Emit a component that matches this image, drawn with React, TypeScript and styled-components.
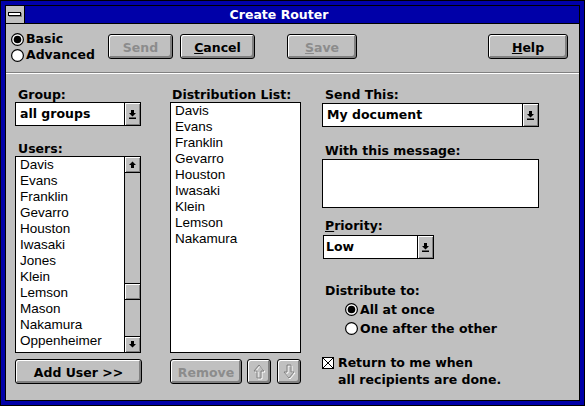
import React from "react";
import styled, { createGlobalStyle } from "styled-components";

const BLUE = "#0000a8";
const FACE = "#c0c0c0";
const SHADOW = "#808080";
const GRAYTEXT = "#8c8c8c";

const GlobalStyle = createGlobalStyle`
  html, body {
    margin: 0;
    padding: 0;
    background: ${FACE};
  }
  * {
    box-sizing: border-box;
  }
`;

const Frame = styled.div`
  width: 585px;
  height: 406px;
  border: 1px solid #000;
  background: ${BLUE};
  padding: 4px;
  font-family: "DejaVu Sans", sans-serif;
  font-weight: bold;
  font-size: 12.5px;
  color: #000;
`;

const Window = styled.div`
  height: 100%;
  border: 1px solid #000;
  background: ${FACE};
  display: flex;
  flex-direction: column;
`;

const TitleBar = styled.div`
  height: 18px;
  flex-shrink: 0;
  display: flex;
  border-bottom: 1px solid #000;
`;

const SystemBox = styled.div`
  width: 19px;
  border-right: 1px solid #000;
  background: ${FACE};
  display: flex;
  align-items: center;
  justify-content: center;
`;

const SystemBar = styled.span`
  width: 13px;
  height: 4px;
  background: #fff;
  border: 1px solid #000;
  box-shadow: 1px 1px 0 ${SHADOW};
  margin: -1px 1px 0 0;
`;

const Title = styled.div`
  flex: 1;
  background: ${BLUE};
  color: #fff;
  line-height: 17px;
  text-align: center;
  padding-right: 46px;
`;

const TopRow = styled.div`
  height: 48px;
  flex-shrink: 0;
  display: flex;
  align-items: flex-start;
  padding: 7px 11px 0 5px;
`;

const ModeGroup = styled.div`
  width: 97px;
  display: flex;
  flex-direction: column;
`;

const RadioRow = styled.div<{ $h: number; $indent?: number }>`
  height: ${(p) => p.$h}px;
  line-height: ${(p) => p.$h}px;
  display: flex;
  align-items: center;
  gap: 2px;
  padding-left: ${(p) => p.$indent ?? 0}px;
  white-space: nowrap;
`;

const Separator = styled.div`
  height: 2px;
  flex-shrink: 0;
  border-top: 1px solid ${SHADOW};
  border-bottom: 1px solid #fff;
`;

const PushButton = styled.div<{ $w: number; $ml?: number; $mt?: number; $off?: boolean }>`
  width: ${(p) => p.$w}px;
  height: 25px;
  flex-shrink: 0;
  margin-left: ${(p) => p.$ml ?? 0}px;
  margin-top: ${(p) => p.$mt ?? 0}px;
  border: 1px solid #000;
  border-radius: 3px;
  background: ${FACE};
  box-shadow: inset 1px 1px 0 #fff, inset -1px -1px 0 ${SHADOW},
    inset -2px -2px 0 ${SHADOW};
  color: ${(p) => (p.$off ? GRAYTEXT : "#000")};
  display: flex;
  align-items: center;
  justify-content: center;
  padding-top: 1px;
  white-space: nowrap;
`;

const Main = styled.div`
  flex: 1;
  display: flex;
  align-items: flex-start;
  padding: 14px 0 0 9px;
`;

const Column = styled.div<{ $w: number; $ml?: number }>`
  width: ${(p) => p.$w}px;
  margin-left: ${(p) => p.$ml ?? 0}px;
  display: flex;
  flex-direction: column;
  align-items: flex-start;
`;

const Label = styled.div<{ $mt?: number }>`
  height: 14px;
  line-height: 14px;
  padding-left: 3px;
  margin-top: ${(p) => p.$mt ?? 0}px;
  white-space: nowrap;
`;

const Combo = styled.div<{ $w: number; $mt?: number; $ml?: number }>`
  width: ${(p) => p.$w}px;
  height: 24px;
  margin-top: ${(p) => p.$mt ?? 0}px;
  margin-left: ${(p) => p.$ml ?? 0}px;
  border: 1px solid #000;
  background: #fff;
  display: flex;
`;

const ComboText = styled.div`
  flex: 1;
  line-height: 21px;
  padding-left: 4px;
  white-space: nowrap;
`;

const DropButton = styled.div`
  width: 16px;
  border-left: 1px solid #000;
  background: ${FACE};
  box-shadow: inset 1px 1px 0 #fff, inset -1px -1px 0 ${SHADOW};
  display: flex;
  align-items: center;
  justify-content: center;
`;

const ListBox = styled.div<{ $w: number; $h: number }>`
  width: ${(p) => p.$w}px;
  height: ${(p) => p.$h}px;
  border: 1px solid #000;
  background: #fff;
  display: flex;
  overflow: hidden;
`;

const Items = styled.div`
  flex: 1;
  padding-left: 4px;
  font-family: "Liberation Sans", Arial, sans-serif;
  font-weight: normal;
  font-size: 13.5px;
  line-height: 16px;
  overflow: hidden;
`;

const ScrollBar = styled.div`
  width: 16px;
  border-left: 1px solid #000;
  background: ${FACE};
  display: flex;
  flex-direction: column;
`;

const ScrollArrow = styled.div<{ $bottom?: boolean }>`
  height: 16px;
  flex-shrink: 0;
  ${(p) => (p.$bottom ? "border-top" : "border-bottom")}: 1px solid #000;
  box-shadow: inset 1px 1px 0 #fff, inset -1px -1px 0 ${SHADOW};
  display: flex;
  align-items: center;
  justify-content: center;
`;

const Track = styled.div`
  flex: 1;
  display: flex;
  flex-direction: column;
`;

const Thumb = styled.div<{ $top: number }>`
  height: 17px;
  margin-top: ${(p) => p.$top}px;
  border-top: 1px solid #000;
  border-bottom: 1px solid #000;
  box-shadow: inset 1px 1px 0 #fff, inset -1px -1px 0 ${SHADOW};
`;

const ButtonRow = styled.div`
  display: flex;
  margin-top: 6px;
`;

const MessageBox = styled.div`
  width: 217px;
  height: 49px;
  margin-top: 1px;
  border: 1px solid #000;
  background: #fff;
`;

const CheckRow = styled.div`
  display: flex;
  align-items: flex-start;
  margin-top: 16px;
  line-height: 17px;
`;

const CheckMark = styled.svg`
  margin-top: 3px;
  margin-right: 4px;
  flex-shrink: 0;
`;

const ComboArrow = () => (
  <svg width="7" height="9" viewBox="0 0 7 9">
    <path d="M2 0h3v3h2L3.5 6.5 0 3h2z" fill="#000" />
    <rect x="0" y="7.5" width="7" height="1.5" fill="#000" />
  </svg>
);

const SolidArrow = ({ down }: { down?: boolean }) => (
  <svg width="7" height="7" viewBox="0 0 7 7">
    <path
      d={down ? "M2 0h3v3h2L3.5 6.5 0 3h2z" : "M3.5 0.5L7 4H5v3H2V4H0z"}
      fill="#000"
    />
  </svg>
);

const OutlineArrow = ({ down }: { down?: boolean }) => {
  const d = down
    ? "M4 1h4v7h3L6 14 1 8h3z"
    : "M6 1l5 6H8v7H4V7H1z";
  return (
    <svg width="13" height="16" viewBox="0 0 13 16">
      <path d={d} fill="none" stroke="#fff" strokeWidth="1" transform="translate(1 1)" />
      <path d={d} fill="none" stroke={SHADOW} strokeWidth="1" />
    </svg>
  );
};

const Radio = ({ on }: { on?: boolean }) => (
  <svg width="13" height="13" viewBox="0 0 13 13" style={{ flexShrink: 0 }}>
    <circle cx="6.5" cy="6.5" r="5.9" fill="#fff" stroke="#000" strokeWidth="1.2" />
    {on && <circle cx="6.5" cy="6.5" r="3.8" fill="#000" />}
  </svg>
);

const users = [
  "Davis",
  "Evans",
  "Franklin",
  "Gevarro",
  "Houston",
  "Iwasaki",
  "Jones",
  "Klein",
  "Lemson",
  "Mason",
  "Nakamura",
  "Oppenheimer",
];

const distribution = [
  "Davis",
  "Evans",
  "Franklin",
  "Gevarro",
  "Houston",
  "Iwasaki",
  "Klein",
  "Lemson",
  "Nakamura",
];

export default function App(): JSX.Element {
  return (
    <Frame>
      <GlobalStyle />
      <Window>
        <TitleBar>
          <SystemBox>
            <SystemBar />
          </SystemBox>
          <Title>Create Router</Title>
        </TitleBar>

        <TopRow>
          <ModeGroup>
            <RadioRow $h={16}>
              <Radio on />
              Basic
            </RadioRow>
            <RadioRow $h={16}>
              <Radio />
              Advanced
            </RadioRow>
          </ModeGroup>
          <PushButton $w={65} $mt={3} $off>
            Send
          </PushButton>
          <PushButton $w={75} $ml={7} $mt={3}>
            <u>C</u>ancel
          </PushButton>
          <PushButton $w={70} $ml={32} $mt={3} $off>
            <u>S</u>ave
          </PushButton>
          <PushButton $w={80} $ml={131} $mt={3}>
            <u>H</u>elp
          </PushButton>
        </TopRow>
        <Separator />

        <Main>
          <Column $w={126}>
            <Label>Group:</Label>
            <Combo $w={126}>
              <ComboText>all groups</ComboText>
              <DropButton>
                <ComboArrow />
              </DropButton>
            </Combo>
            <Label $mt={16}>Users:</Label>
            <ListBox $w={126} $h={197}>
              <Items>
                {users.map((u) => (
                  <div key={u}>{u}</div>
                ))}
              </Items>
              <ScrollBar>
                <ScrollArrow>
                  <SolidArrow />
                </ScrollArrow>
                <Track>
                  <Thumb $top={110} />
                </Track>
                <ScrollArrow $bottom>
                  <SolidArrow down />
                </ScrollArrow>
              </ScrollBar>
            </ListBox>
            <PushButton $w={127} $mt={6}>
              Add User &gt;&gt;
            </PushButton>
          </Column>

          <Column $w={131} $ml={29}>
            <Label style={{ paddingLeft: 2 }}>Distribution List:</Label>
            <ListBox $w={131} $h={251}>
              <Items>
                {distribution.map((u) => (
                  <div key={u}>{u}</div>
                ))}
              </Items>
            </ListBox>
            <ButtonRow>
              <PushButton $w={72} $off>
                Remove
              </PushButton>
              <PushButton $w={24} $ml={5}>
                <OutlineArrow />
              </PushButton>
              <PushButton $w={24} $ml={6}>
                <OutlineArrow down />
              </PushButton>
            </ButtonRow>
          </Column>

          <Column $w={217} $ml={21}>
            <Label>Send This:</Label>
            <Combo $w={217} $mt={1}>
              <ComboText>My document</ComboText>
              <DropButton>
                <ComboArrow />
              </DropButton>
            </Combo>
            <Label $mt={17}>With this message:</Label>
            <MessageBox />
            <Label $mt={11}>
              <u>P</u>riority:
            </Label>
            <Combo $w={111} $mt={2} $ml={1}>
              <ComboText style={{ paddingLeft: 2 }}>Low</ComboText>
              <DropButton>
                <ComboArrow />
              </DropButton>
            </Combo>
            <Label $mt={25}>Distribute to:</Label>
            <div style={{ marginTop: 2 }}>
              <RadioRow $h={19} $indent={23}>
                <Radio on />
                All at once
              </RadioRow>
              <RadioRow $h={19} $indent={23}>
                <Radio />
                One after the other
              </RadioRow>
            </div>
            <CheckRow>
              <CheckMark width="12" height="12" viewBox="0 0 12 12">
                <rect x="0.5" y="0.5" width="11" height="11" fill="#fff" stroke="#000" />
                <path d="M1 1L11 11M11 1L1 11" stroke="#000" strokeWidth="1" />
              </CheckMark>
              <div>
                Return to me when
                <br />
                all recipients are done.
              </div>
            </CheckRow>
          </Column>
        </Main>
      </Window>
    </Frame>
  );
}
